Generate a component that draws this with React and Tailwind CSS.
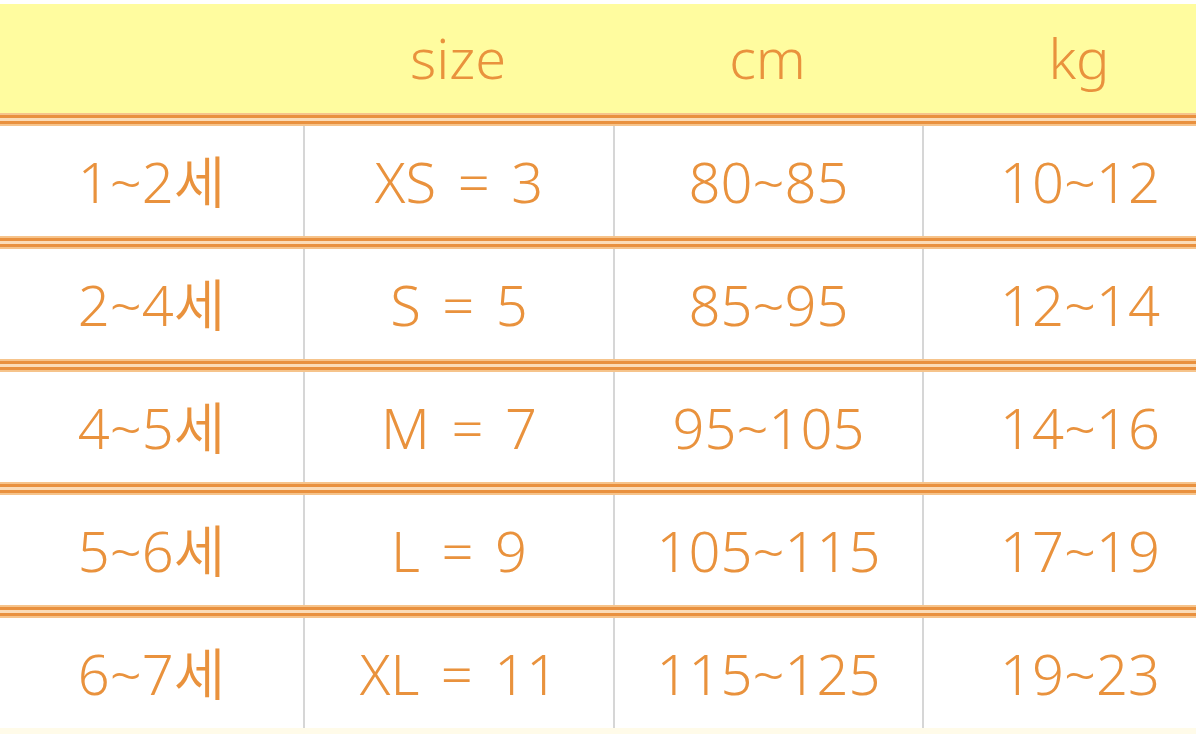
const rows = [
  ['1~2세', 'XS = 3', '80~85', '10~12'],
  ['2~4세', 'S = 5', '85~95', '12~14'],
  ['4~5세', 'M = 7', '95~105', '14~16'],
  ['5~6세', 'L = 9', '105~115', '17~19'],
  ['6~7세', 'XL = 11', '115~125', '19~23'],
]

const cols = 'grid grid-cols-[303px_310px_309px_314px]'

function DoubleLine() {
  return (
    <div className="flex flex-col w-full">
      <div className="h-[2px] bg-[#f6c48c]" />
      <div className="h-[3px] bg-[#e9913f]" />
      <div className="h-[3px] bg-[#fbdcb8]" />
      <div className="h-[3px] bg-[#e9913f]" />
      <div className="h-[2px] bg-[#f6c48c]" />
    </div>
  )
}

export default function App() {
  return (
    <div
      className="w-[1196px] h-[734px] overflow-hidden bg-white text-[#e9923d] text-[56px] font-[360] leading-none"
      style={{ fontFamily: '"Noto Sans", "Noto Sans CJK KR", sans-serif' }}
    >
      <div className="h-[4px] bg-white" />
      {/* header */}
      <div className={`${cols} h-[109px] bg-[#fffc9f]`}>
        <div />
        <div className="flex items-center justify-center pb-[4px]">size</div>
        <div className="flex items-center justify-center pb-[4px]">cm</div>
        <div className="flex items-center justify-center pb-[4px]">kg</div>
      </div>
      <DoubleLine />
      {rows.map((row, i) => (
        <div key={i}>
          <div className={`${cols} h-[110px]`}>
            {row.map((cell, j) => (
              <div
                key={j}
                className={`flex items-center justify-center whitespace-pre [word-spacing:7px] ${j > 0 ? 'border-l-2 border-[#d6d6d6]' : ''}`}
              >
                {cell}
              </div>
            ))}
          </div>
          {i < rows.length - 1 && <DoubleLine />}
        </div>
      ))}
      <div className="h-[6px] bg-[#fffbe9]" />
    </div>
  )
}
